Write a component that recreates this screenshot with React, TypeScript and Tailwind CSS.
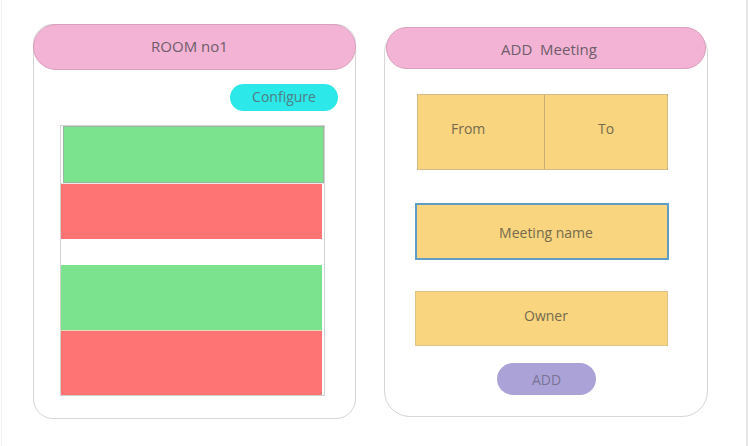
import React from "react";

export default function App() {
  const font = { fontFamily: '"Open Sans", "Noto Sans", sans-serif' };
  return (
    <div className="w-[751px] h-[446px] bg-white relative overflow-hidden" style={font}>
      <div className="absolute left-[1px] top-0 h-full w-px bg-[#f2f2f2]" />
      <div className="absolute left-[746px] top-0 h-full w-[2px] bg-[#e6e6e6]" />
      <div className="flex items-start pl-[33px]">
        {/* Left card */}
        <div className="mt-[24px] w-[323px] h-[395px] rounded-[20px] border border-[#d6d6d6] flex flex-col">
          <div className="-m-px h-[46px] rounded-full bg-[#f3b3d4] border border-[#d9a0bd] flex items-center justify-center pr-[10px] pb-[2px] text-[15px] text-[#6e5d6a]">
            ROOM no1
          </div>
          <div className="flex justify-end pr-[17px] mt-[15px]">
            <div className="w-[108px] h-[27px] rounded-full bg-[#2de8e8] flex items-center justify-center pb-[2px] text-[14px] text-[#4f7e84]">
              Configure
            </div>
          </div>
          <div className="ml-[26px] mt-[14px] w-[265px] h-[271px] border border-[#d2d2d2] flex flex-col">
            <div className="h-[57px] ml-[2px] bg-[#7be38e] border border-[#9ab89f]" />
            <div className="h-[1px] bg-[#e8e8e8]" />
            <div className="h-[55px] mr-[2px] bg-[#fe7474]" />
            <div className="h-[26px] bg-white" />
            <div className="h-[66px] mr-[2px] bg-[#7be38e] border-b border-[#e8d8b8]" />
            <div className="h-[64px] mr-[2px] bg-[#fe7474]" />
          </div>
        </div>
        {/* Right card */}
        <div className="ml-[28px] mt-[27px] w-[324px] h-[390px] rounded-[26px] border border-[#d6d6d6] flex flex-col">
          <div className="mx-[1px] -mt-px h-[42px] rounded-full bg-[#f3b3d4] border border-[#d9a0bd] flex items-center justify-center pl-[6px] pt-[2px] text-[15px] text-[#6e5d6a] whitespace-pre">
            {"ADD  Meeting"}
          </div>
          <div className="ml-[32px] mt-[25px] w-[251px] h-[76px] flex bg-[#f8d57e] border border-[#d2bb85]">
            <div className="w-[127px] h-full border-r border-[#c7ae78] flex items-center pl-[33px] pb-[8px] text-[14px] text-[#756a4e]">
              From
            </div>
            <div className="flex-1 flex items-center justify-center pb-[8px] text-[14px] text-[#756a4e]">
              To
            </div>
          </div>
          <div className="ml-[30px] mt-[33px] w-[254px] h-[57px] bg-[#f8d57e] border-2 border-[#5f9dc6] flex items-center justify-center pl-[8px] pt-[2px] text-[14px] text-[#756a4e]">
            Meeting name
          </div>
          <div className="ml-[30px] mt-[31px] w-[253px] h-[55px] bg-[#f8d57e] border border-[#dcc489] flex items-center justify-center pl-[9px] pb-[6px] text-[14px] text-[#756a4e]">
            Owner
          </div>
          <div className="ml-[112px] mt-[17px] w-[99px] h-[32px] rounded-full bg-[#aba3d8] flex items-center justify-center text-[14px] text-[#7a7494]">
            ADD
          </div>
        </div>
      </div>
    </div>
  );
}
